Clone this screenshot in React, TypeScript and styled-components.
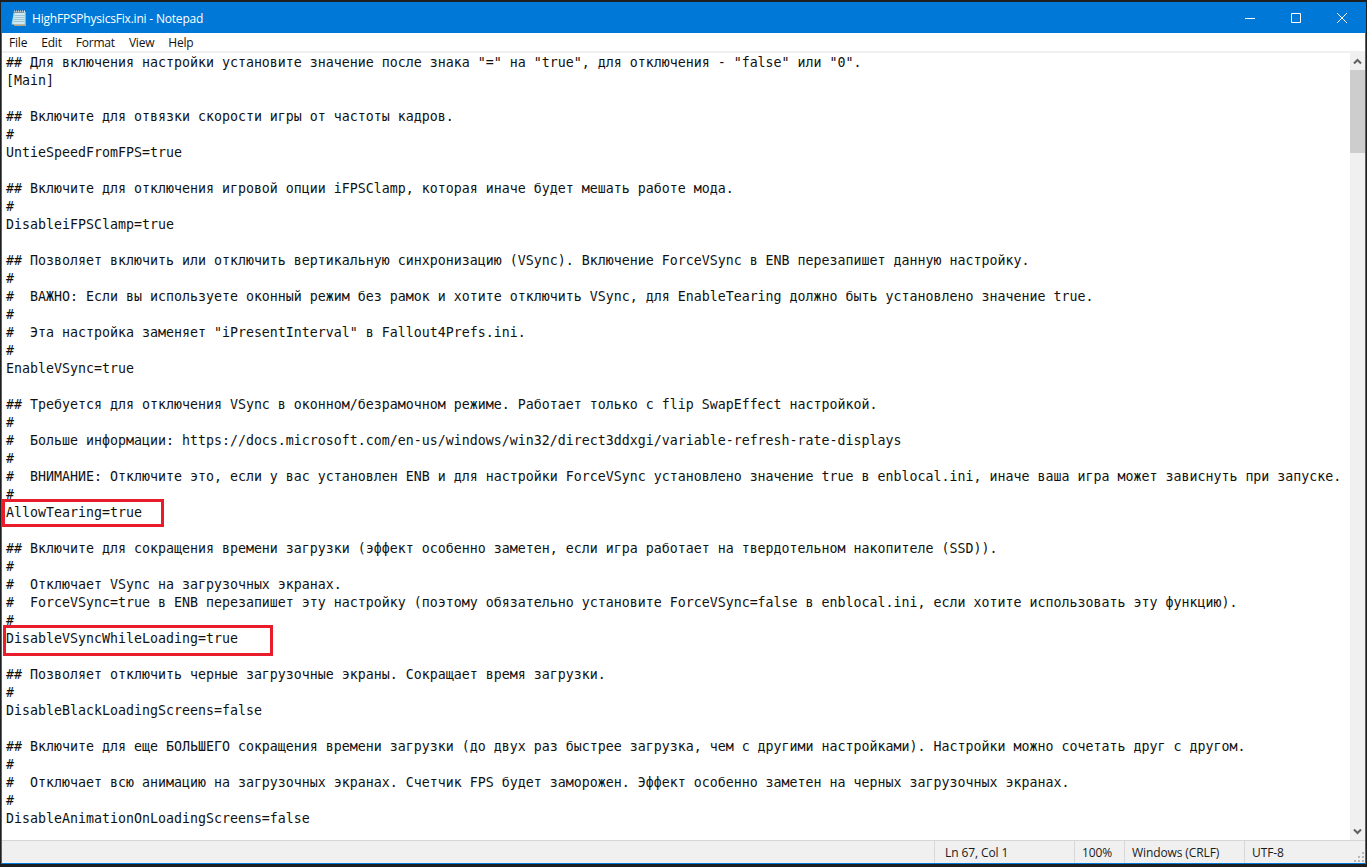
import React from 'react';
import styled, { createGlobalStyle } from 'styled-components';

const GlobalStyle = createGlobalStyle`
  html, body {
    margin: 0;
    padding: 0;
    background: #1d1f21;
    overflow: hidden;
  }
`;

const Desktop = styled.div`
  width: 1367px;
  height: 867px;
  padding: 2px 1px 3px 1px;
  box-sizing: border-box;
`;

const Window = styled.div`
  height: 100%;
  display: grid;
  grid-template-rows: 31px 18px 1fr 23px;
  background: #fff;
  border: 1px solid #0078d7;
  border-top: 0;
  box-sizing: border-box;
  font-family: 'Open Sans', 'Noto Sans', sans-serif;
`;

const TitleBar = styled.div`
  display: flex;
  align-items: center;
  background: #0078d7;
  color: #fff;
  font-size: 12px;
  padding-left: 8px;
`;

const TitleText = styled.span`
  margin-left: 4px;
  flex: 1;
  letter-spacing: -0.2px;
  padding-top: 1px;
`;

const WinButton = styled.div`
  width: 46px;
  height: 31px;
  display: flex;
  align-items: center;
  justify-content: center;
`;

const MenuBar = styled.div`
  display: flex;
  align-items: center;
  background: #fff;
  font-size: 12px;
  color: #111;
  padding: 1px 0 0 7px;
`;

const MenuItem = styled.span`
  padding-right: 14px;
  letter-spacing: -0.2px;
`;

const Body = styled.div`
  display: grid;
  grid-template-columns: 1fr 15px;
  border-top: 2px solid #f0f0f0;
  min-height: 0;
  overflow: hidden;
`;

const Editor = styled.div`
  padding: 1px 0 0 4px;
  font-family: 'DejaVu Sans Mono', 'Liberation Mono', monospace;
  font-size: 13.29px;
  line-height: 18px;
  color: #111;
  overflow: hidden;
`;

const Line = styled.div`
  position: relative;
  height: 18px;
  white-space: pre;
`;

const Mark = styled.span<{ $width: number; $left: number; $top: number; $height: number }>`
  position: absolute;
  left: ${p => p.$left}px;
  top: ${p => p.$top}px;
  width: ${p => p.$width}px;
  height: ${p => p.$height}px;
  border: 3px solid #e81c2a;
  box-sizing: border-box;
`;

const Scrollbar = styled.div`
  display: grid;
  grid-template-rows: 17px 83px 1fr 17px;
  background: #f0f0f0;
`;

const ScrollArrow = styled.div`
  display: flex;
  align-items: center;
  justify-content: center;
`;

const Thumb = styled.div`
  background: #cdcdcd;
`;

const StatusBar = styled.div`
  display: grid;
  grid-template-columns: 932px 140px 50px 120px 1fr;
  background: #f0f0f0;
  border-top: 1px solid #d7d7d7;
  font-size: 12px;
  color: #1a1a1a;
  position: relative;
`;

const StatusCell = styled.div<{ $pad: number }>`
  display: flex;
  align-items: center;
  padding-left: ${p => p.$pad}px;
  border-left: 1px solid #d7d7d7;
  letter-spacing: -0.1px;
  &:first-child {
    border-left: 0;
  }
`;

const Grip = styled.svg`
  position: absolute;
  right: 1px;
  bottom: 1px;
`;

const lines: string[] = [
  '## Для включения настройки установите значение после знака "=" на "true", для отключения - "false" или "0".',
  '[Main]',
  '',
  '## Включите для отвязки скорости игры от частоты кадров.',
  '#',
  'UntieSpeedFromFPS=true',
  '',
  '## Включите для отключения игровой опции iFPSClamp, которая иначе будет мешать работе мода.',
  '#',
  'DisableiFPSClamp=true',
  '',
  '## Позволяет включить или отключить вертикальную синхронизацию (VSync). Включение ForceVSync в ENB перезапишет данную настройку.',
  '#',
  '#  ВАЖНО: Если вы используете оконный режим без рамок и хотите отключить VSync, для EnableTearing должно быть установлено значение true.',
  '#',
  '#  Эта настройка заменяет "iPresentInterval" в Fallout4Prefs.ini.',
  '#',
  'EnableVSync=true',
  '',
  '## Требуется для отключения VSync в оконном/безрамочном режиме. Работает только с flip SwapEffect настройкой.',
  '#',
  '#  Больше информации: https://docs.microsoft.com/en-us/windows/win32/direct3ddxgi/variable-refresh-rate-displays',
  '#',
  '#  ВНИМАНИЕ: Отключите это, если у вас установлен ENB и для настройки ForceVSync установлено значение true в enblocal.ini, иначе ваша игра может зависнуть при запуске.',
  '#',
  'AllowTearing=true',
  '',
  '## Включите для сокращения времени загрузки (эффект особенно заметен, если игра работает на твердотельном накопителе (SSD)).',
  '#',
  '#  Отключает VSync на загрузочных экранах.',
  '#  ForceVSync=true в ENB перезапишет эту настройку (поэтому обязательно установите ForceVSync=false в enblocal.ini, если хотите использовать эту функцию).',
  '#',
  'DisableVSyncWhileLoading=true',
  '',
  '## Позволяет отключить черные загрузочные экраны. Сокращает время загрузки.',
  '#',
  'DisableBlackLoadingScreens=false',
  '',
  '## Включите для еще БОЛЬШЕГО сокращения времени загрузки (до двух раз быстрее загрузка, чем с другими настройками). Настройки можно сочетать друг с другом.',
  '#',
  '#  Отключает всю анимацию на загрузочных экранах. Счетчик FPS будет заморожен. Эффект особенно заметен на черных загрузочных экранах.',
  '#',
  'DisableAnimationOnLoadingScreens=false',
];

const menus = ['File', 'Edit', 'Format', 'View', 'Help'];

const NotepadIcon = () => (
  <svg width="18" height="18" viewBox="0 0 18 18">
    <path d="M5 3h11v14H4z" fill="#b9a27c" />
    <path d="M4 2h11v13.5H1.5z" fill="#a7d8e8" />
    <path d="M5 3.5h9.5v11.5H3z" fill="#cfeaf2" />
    <path d="M4.5 6.5h10M4.5 8.5h10M4 10.5h10.5M3.7 12.5h10.8" stroke="#9cc6d6" strokeWidth="1" />
    <path d="M5 1v3M7 1v3M9 1v3M11 1v3M13 1v3" stroke="#4a4f55" strokeWidth="1" />
    <path d="M4 2h11" stroke="#f4f8fa" strokeWidth="1" strokeDasharray="1 1" />
  </svg>
);

const App = () => (
  <Desktop>
    <GlobalStyle />
    <Window>
      <TitleBar>
        <NotepadIcon />
        <TitleText>HighFPSPhysicsFix.ini - Notepad</TitleText>
        <WinButton>
          <svg width="10" height="10" viewBox="0 0 10 10">
            <path d="M0 5.5h10" stroke="#fff" />
          </svg>
        </WinButton>
        <WinButton>
          <svg width="10" height="10" viewBox="0 0 10 10">
            <path d="M.5.5h9v9h-9z" fill="none" stroke="#fff" />
          </svg>
        </WinButton>
        <WinButton>
          <svg width="10" height="10" viewBox="0 0 10 10">
            <path d="M0 0l10 10M10 0L0 10" stroke="#fff" />
          </svg>
        </WinButton>
      </TitleBar>
      <MenuBar>
        {menus.map(m => (
          <MenuItem key={m}>{m}</MenuItem>
        ))}
      </MenuBar>
      <Body>
        <Editor>
          {lines.map((text, i) => (
            <Line key={i}>
              {text}
              {i === 25 && <Mark $left={-4} $top={-5} $width={162} $height={28} />}
              {i === 32 && <Mark $left={-3} $top={-5} $width={270} $height={31} />}
            </Line>
          ))}
        </Editor>
        <Scrollbar>
          <ScrollArrow>
            <svg width="9" height="7" viewBox="0 0 9 7">
              <path d="M1 5.5l3.5-3.5 3.5 3.5" fill="none" stroke="#606060" strokeWidth="2" />
            </svg>
          </ScrollArrow>
          <Thumb />
          <div />
          <ScrollArrow>
            <svg width="9" height="7" viewBox="0 0 9 7">
              <path d="M1 1.5l3.5 3.5 3.5-3.5" fill="none" stroke="#606060" strokeWidth="2" />
            </svg>
          </ScrollArrow>
        </Scrollbar>
      </Body>
      <StatusBar>
        <StatusCell $pad={0} />
        <StatusCell $pad={10}>Ln 67, Col 1</StatusCell>
        <StatusCell $pad={7}>100%</StatusCell>
        <StatusCell $pad={7}>Windows (CRLF)</StatusCell>
        <StatusCell $pad={7}>UTF-8</StatusCell>
        <Grip width="10" height="10" viewBox="0 0 10 10">
          <path d="M8 0h2v2H8zM4 4h2v2H4zM8 4h2v2H8zM0 8h2v2H0zM4 8h2v2H4zM8 8h2v2H8z" fill="#b8b8b8" />
        </Grip>
      </StatusBar>
    </Window>
  </Desktop>
);

export default App;
